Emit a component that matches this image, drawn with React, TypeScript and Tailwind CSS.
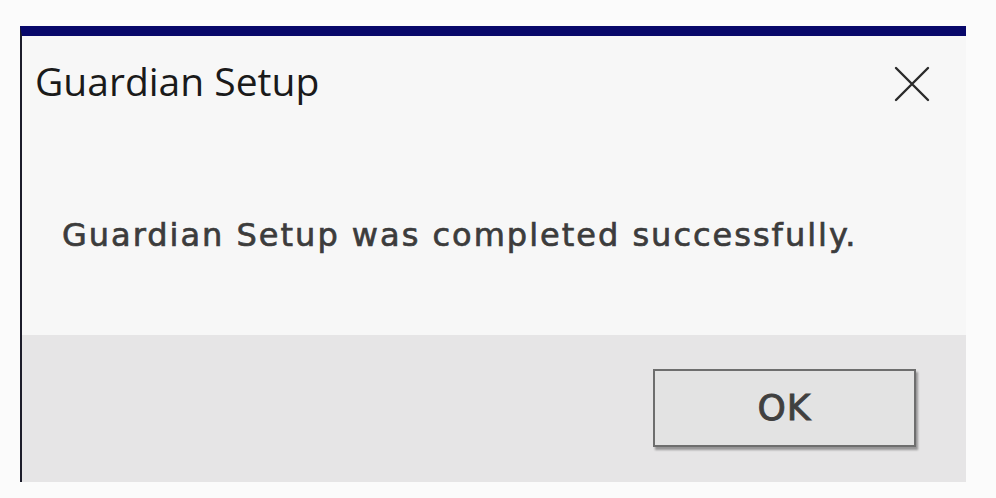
export default function App() {
  return (
    <div className="w-[996px] h-[498px] bg-[#fbfbfb] pt-[26px] pl-[20px]">
      <div className="w-[946px] h-[456px] flex flex-col bg-[#f7f7f7] border-t-[10px] border-t-[#08086a] border-l-2 border-l-[#1c1c2a]">
        <div className="h-[122px] flex justify-between items-start">
          <div
            className="pt-[21px] pl-[13px] text-[39px] leading-[48px] text-[#1a1a1a]"
            style={{ fontFamily: '"Open Sans", "Noto Sans", sans-serif' }}
          >
            Guardian Setup
          </div>
          <button className="mt-[30px] mr-[36px] w-[36px] h-[36px] flex items-center justify-center">
            <svg width="36" height="36" viewBox="0 0 36 36">
              <path d="M2 2 L34 34 M34 2 L2 34" stroke="#2a2a2a" strokeWidth="2.4" strokeLinecap="round" />
            </svg>
          </button>
        </div>
        <div
          className="h-[177px] pl-[40px] pt-[57px] text-[32px] leading-[40px] tracking-[2px] text-[#3c3c3c] [-webkit-text-stroke:0.7px_#3c3c3c]"
          style={{ fontFamily: '"DejaVu Sans", Verdana, sans-serif' }}
        >
          Guardian Setup was completed successfully.
        </div>
        <div className="flex-1 bg-[#e6e5e6] flex justify-end items-start pt-[34px] pr-[50px]">
          <button
            className="w-[263px] h-[78px] bg-[#e3e3e3] border-2 border-[#6e6e6e] shadow-[2px_3px_2px_rgba(0,0,0,0.35)] text-[36px] tracking-[1px] text-[#404040] [-webkit-text-stroke:0.9px_#404040] flex items-center justify-center"
            style={{ fontFamily: '"DejaVu Sans", Verdana, sans-serif' }}
          >
            OK
          </button>
        </div>
      </div>
    </div>
  )
}
